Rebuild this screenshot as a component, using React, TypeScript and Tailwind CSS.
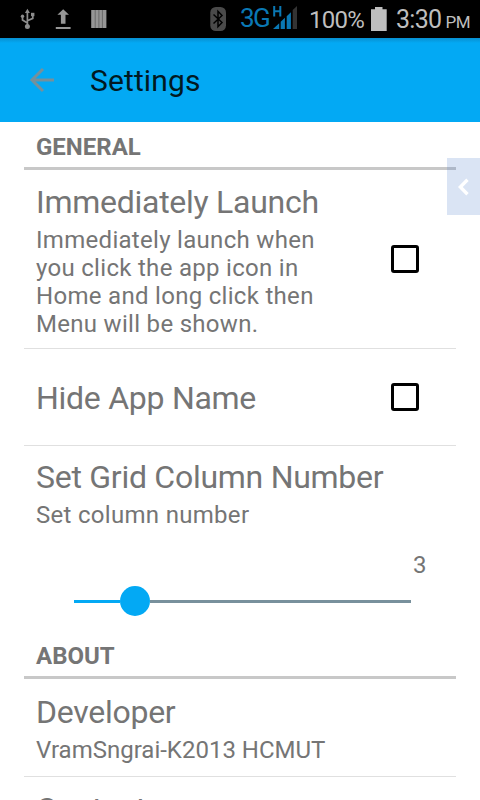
import type { ReactNode } from 'react'

const StatusBar = () => (
  <div className="flex h-[38px] shrink-0 items-center bg-black text-[#bebebe]">
    <svg width="120" height="38" viewBox="0 0 120 38" fill="none">
      {/* usb */}
      <g stroke="#8c8c8c" strokeWidth="1.7">
        <path d="M27.4 11v15M27.4 23l-4.9-3v-4M27.4 20.8l5.4-2.4v-3.4" />
      </g>
      <path d="M27.4 8.8l2.5 4.2h-5z" fill="#8c8c8c" />
      <circle cx="27.4" cy="26.6" r="2.5" fill="#8c8c8c" />
      <circle cx="22.5" cy="16.3" r="1.7" fill="#8c8c8c" />
      <path d="M31 12.8h3.4v3.4H31z" fill="#8c8c8c" />
      {/* upload */}
      <path
        d="M63.2 9.3l5.8 5.4h-3.5v9h-4.6v-9h-3.5zM55.8 27h14.8v2H55.8z"
        fill="#969696"
      />
      {/* barcode */}
      <path d="M91.2 10h15.2v18H91.2z" fill="#969696" />
      <path d="M95.2 10v18M98.9 10v18M102.4 10v18" stroke="#606060" strokeWidth="0.8" />
    </svg>
    <svg
      className="ml-[90px]"
      width="16"
      height="26"
      viewBox="0 0 16 26"
      fill="none"
    >
      <rect x="0.3" y="1" width="15.7" height="24" rx="5.5" fill="#4a4a4a" />
      <path
        d="M3.5 8.5l8.5 8-4 4.2V5.3l4 4.2-8.5 8"
        stroke="#000"
        strokeWidth="1.5"
      />
    </svg>
    <span className="ml-[14px] w-[32px] pb-px text-[26px] leading-[37px] tracking-[-1.6px] text-[#0a78b4]">
      3G
    </span>
    <svg width="26" height="38" viewBox="0 0 26 38" fill="none">
      <path d="M2.2 6v10.5M8.3 6v10.5M2.2 11.2h6.1" stroke="#0a78b4" strokeWidth="2" />
      <path
        d="M1 29l6.2-5.8V29zM8.7 21.8l4.2-4V29H8.7zM14.7 16.2l4.2-4V29h-4.2z"
        fill="#0a78b4"
      />
      <path d="M20.7 10l4.3-4v23h-4.3z" fill="#333" />
    </svg>
    <span className="ml-[11px] w-[62px] pt-[2px] text-[24px] leading-[36px] tracking-[-0.7px]">
      100%
    </span>
    <svg width="16" height="24" viewBox="0 0 16 24" fill="#bebebe">
      <path d="M4 0h7.5v2.2H15.7V24H0V2.2h4z" />
    </svg>
    <span className="ml-[9px] flex items-baseline gap-[4px] pt-[3px] text-[25px] leading-[35px] tracking-[-0.7px]">
      3:30<span className="text-[17px] tracking-[-0.5px]">PM</span>
    </span>
  </div>
)

const AppBar = () => (
  <div className="flex h-[84px] shrink-0 items-center bg-[#03a9f4] bg-linear-to-b from-[#078fd0] from-0% to-[#03a9f4] to-6% pl-[29px]">
    <svg width="26" height="26" viewBox="0 0 26 26" fill="none">
      <path
        d="M25 13H3.5M14 2L3 13l11 11"
        stroke="#76909b"
        strokeWidth="3"
      />
    </svg>
    <h1 className="ml-[35px] pt-[2px] text-[30px] leading-[36px] tracking-[0.12px] text-[#011922]">
      Settings
    </h1>
  </div>
)

const SectionHeader = ({ children }: { children: ReactNode }) => (
  <h2 className="h-12 shrink-0 border-b-[3px] border-[#c8c8c8] px-3 pt-[11px] text-[24px] leading-[28px] font-bold">
    {children}
  </h2>
)

const Title = ({ children }: { children: ReactNode }) => (
  <div className="text-[32px] leading-[38px] tracking-[-0.27px] whitespace-nowrap">
    {children}
  </div>
)

const Summary = ({ children }: { children: ReactNode }) => (
  <div className="mt-[5px] text-[24px] leading-[28px] tracking-[0.3px] whitespace-nowrap">
    {children}
  </div>
)

const Checkbox = () => (
  <span className="mr-[37px] size-7 shrink-0 rounded-[3px] border-3 border-black" />
)

const Slider = () => (
  <div className="mr-[45px] ml-[38px] flex h-[30px] items-center">
    <div className="h-[3px] w-[46px] bg-[#03a9f4]" />
    <div className="size-[30px] rounded-full bg-[#03a9f4]" />
    <div className="h-[3px] flex-1 bg-[#78909c]" />
  </div>
)

export default function App() {
  return (
    <div className="relative flex h-[800px] w-[480px] flex-col overflow-hidden bg-white font-[Roboto,sans-serif] text-[#757575]">
      <StatusBar />
      <AppBar />
      <div className="flex min-h-0 flex-1 flex-col overflow-hidden px-6">
        <SectionHeader>GENERAL</SectionHeader>
        <div className="flex h-[179px] shrink-0 items-center justify-between border-b border-[#e0e0e0] pl-3">
          <div className="pt-[3px]">
            <Title>Immediately Launch</Title>
            <Summary>
              Immediately launch when
              <br />
              you click the app icon in
              <br />
              Home and long click then
              <br />
              Menu will be shown.
            </Summary>
          </div>
          <Checkbox />
        </div>
        <div className="flex h-[97px] shrink-0 items-center justify-between border-b border-[#e0e0e0] pl-3">
          <div className="pt-[2px]">
            <Title>Hide App Name</Title>
          </div>
          <Checkbox />
        </div>
        <div className="h-[185px] shrink-0 pt-3 pl-3">
          <Title>Set Grid Column Number</Title>
          <Summary>Set column number</Summary>
          <div className="mt-[22px] pr-[29.5px] text-right text-[24px] leading-[28px]">
            3
          </div>
          <div className="mt-[7px]">
            <Slider />
          </div>
        </div>
        <SectionHeader>ABOUT</SectionHeader>
        <div className="h-[98px] shrink-0 border-b border-[#e0e0e0] pt-[14px] pl-3">
          <Title>Developer</Title>
          <div className="mt-[5px] text-[24px] leading-[28px] whitespace-nowrap">
            VramSngrai-K2013 HCMUT
          </div>
        </div>
        <div className="shrink-0 pt-[13px] pl-3">
          <Title>Contact</Title>
        </div>
      </div>
      {/* floating side handle */}
      <div className="absolute top-[158px] right-0 flex h-[57px] w-[33px] items-center justify-center bg-[#4678c8]/20">
        <svg width="12" height="18" viewBox="0 0 12 18" fill="none">
          <path d="M9.5 1.8L2.3 9l7.2 7.2" stroke="#fff" strokeWidth="3.4" />
        </svg>
      </div>
    </div>
  )
}
